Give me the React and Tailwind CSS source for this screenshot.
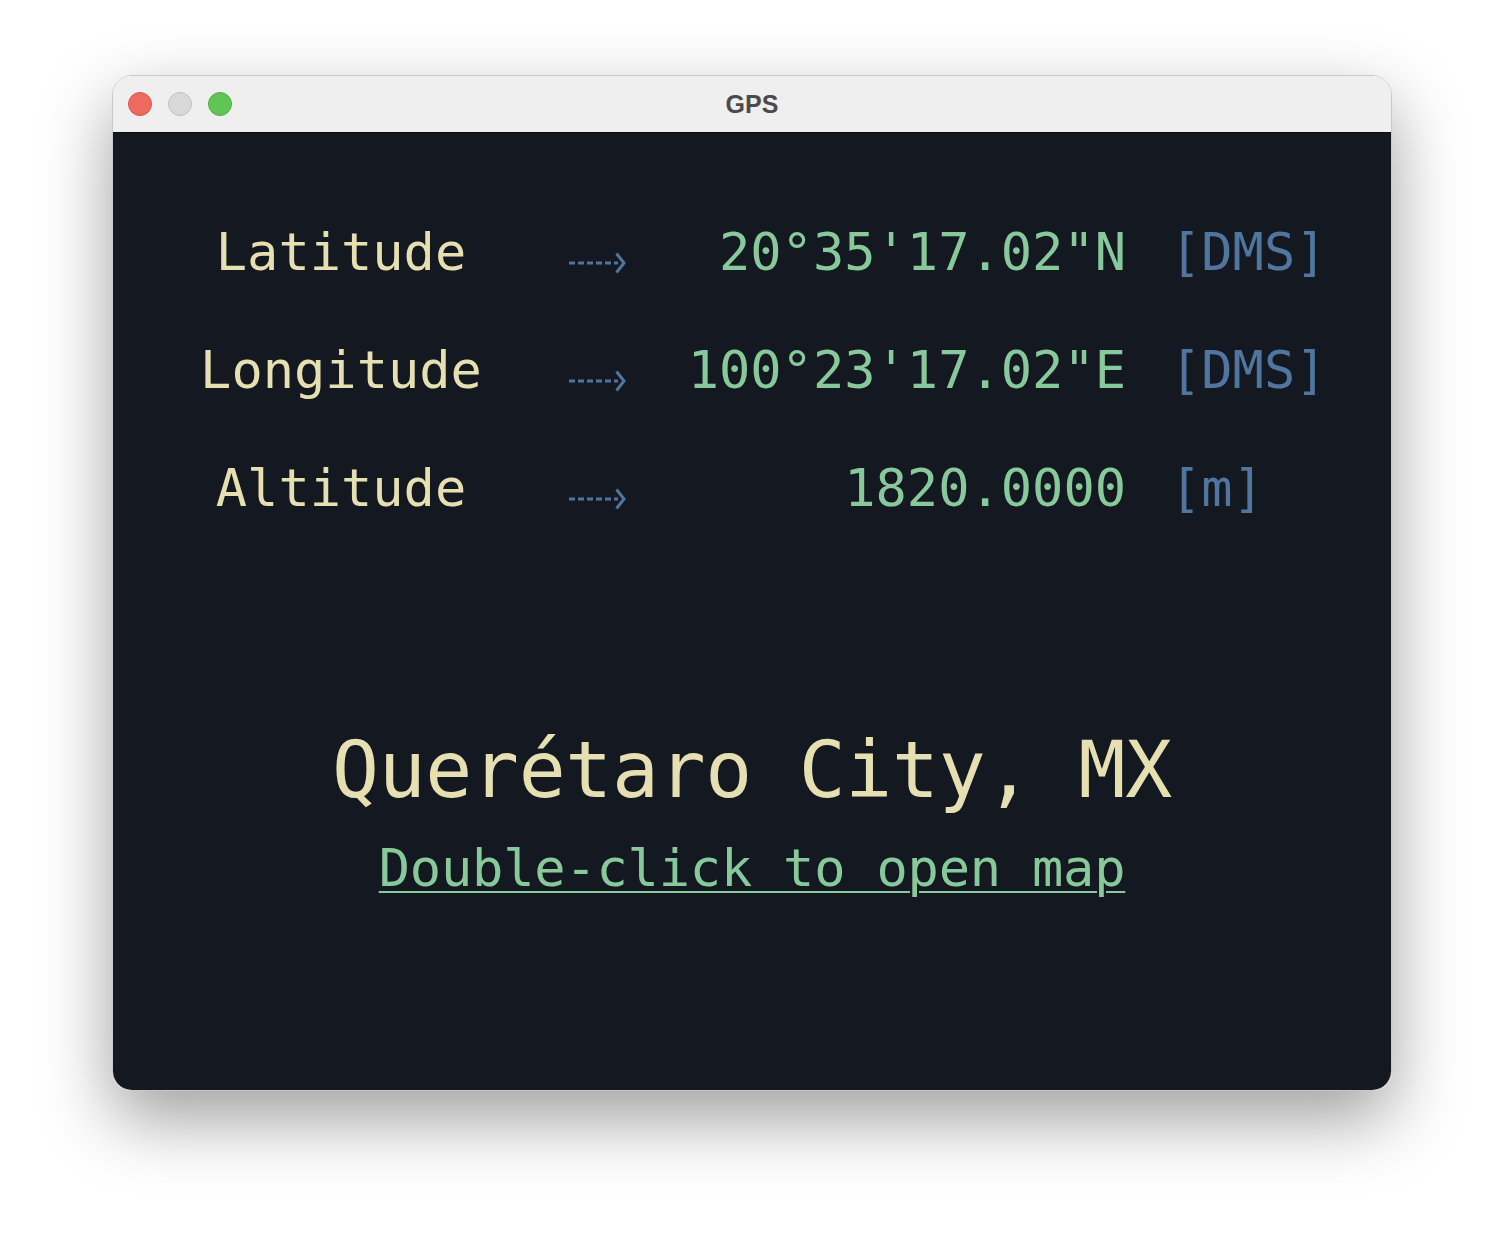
import React from 'react';

const mono = { fontFamily: '"DejaVu Sans Mono", "Liberation Mono", monospace' };

const rows = [
    { label: 'Latitude', value: '20°35\'17.02"N', unit: '[DMS]' },
    { label: 'Longitude', value: '100°23\'17.02"E', unit: '[DMS]' },
    { label: 'Altitude', value: '1820.0000', unit: '[m]' },
];

// dotted arrow drawn between label and value
const DottedArrow = () => (
    <svg width="58" height="22" viewBox="0 0 58 22" className="shrink-0 mt-[22px]">
        <g fill="#50759e">
            <rect x="1" y="9.5" width="6" height="3" />
            <rect x="10" y="9.5" width="6" height="3" />
            <rect x="19" y="9.5" width="6" height="3" />
            <rect x="28" y="9.5" width="6" height="3" />
            <rect x="37" y="9.5" width="6" height="3" />
            <rect x="46" y="9.5" width="4" height="3" />
        </g>
        <path d="M48.5 1.5 L56 11 L48.5 20.5" fill="none" stroke="#50759e" strokeWidth="3" />
    </svg>
);

const App = () => {
    return (
        <div className="w-[1504px] h-[1240px] bg-white pt-[75px]">
            <div className="mx-auto w-[1280px] h-[1016px] rounded-[20px] overflow-hidden shadow-[0_28px_70px_rgba(0,0,0,0.38)] border border-[#c9c9c9] flex flex-col">

                {/* Title bar */}
                <div className="h-[57px] shrink-0 bg-[#efefef] border-b border-[#0b0d10] grid grid-cols-[1fr_auto_1fr] items-center">
                    <div className="flex items-center gap-[16px] pl-[15px]">
                        <span className="w-[24px] h-[24px] rounded-full bg-[#ee6a5f] border border-[#d5564b]" />
                        <span className="w-[24px] h-[24px] rounded-full bg-[#d8d8d8] border border-[#bfbfbf]" />
                        <span className="w-[24px] h-[24px] rounded-full bg-[#61c554] border border-[#4fae43]" />
                    </div>
                    <div
                        className="text-[25px] font-bold text-[#4b4b4b] leading-none"
                        style={{ fontFamily: '"Liberation Sans", Arial, sans-serif' }}
                    >
                        GPS
                    </div>
                    <div />
                </div>

                {/* Content */}
                <div className="flex-1 bg-[#141921] pt-[60px]" style={mono}>
                    {rows.map((r) => (
                        <div key={r.label} className="flex items-center h-[118px] text-[52px] leading-[118px]">
                            <div className="w-[322px] ml-[67px] text-center text-[#e6dfb1]">{r.label}</div>
                            <div className="ml-[66px]">
                                <DottedArrow />
                            </div>
                            <div className="w-[500px] shrink-0 text-right text-[#88c99b] whitespace-pre">{r.value}</div>
                            <div className="ml-[44px] text-[#50759e]">{r.unit}</div>
                        </div>
                    ))}

                    <div className="mt-[176px] text-center text-[78px] leading-[94px] tracking-[-0.3px] text-[#e6dfb1] whitespace-pre">
                        Querétaro City, MX
                    </div>
                    <div className="mt-[21px] text-center text-[52px] leading-[60px] tracking-[-0.2px]">
                        <span className="text-[#88c99b] underline decoration-2 underline-offset-[5px] whitespace-pre">
                            Double-click to open map
                        </span>
                    </div>
                </div>
            </div>
        </div>
    );
};

export default App;
